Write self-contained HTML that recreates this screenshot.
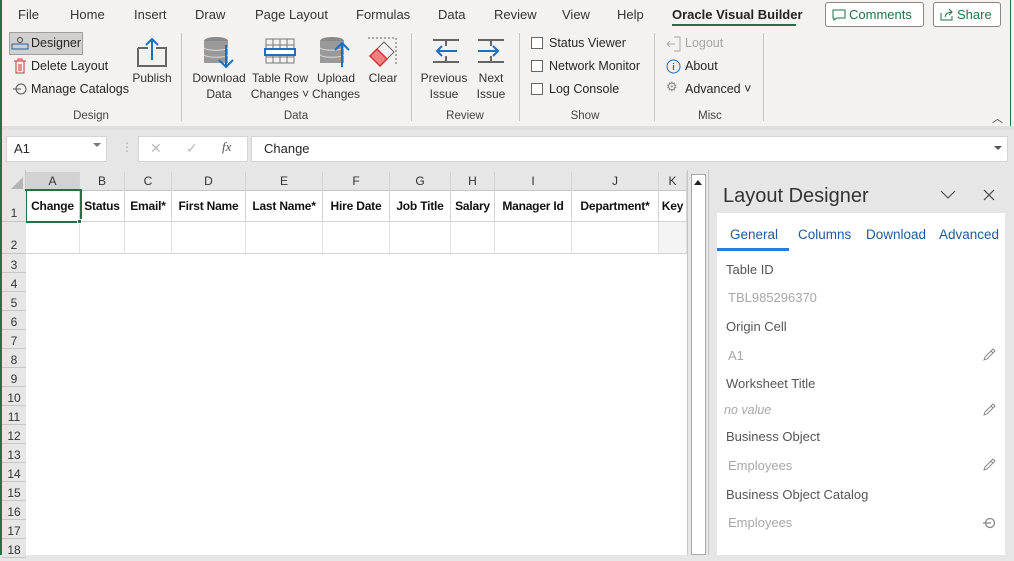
<!DOCTYPE html>
<html><head><meta charset="utf-8"><style>
*{box-sizing:border-box;margin:0;padding:0}
body{width:1014px;height:555px;overflow:hidden;font-family:"Segoe UI","Liberation Sans",sans-serif;font-size:12px;color:#262626;background:#e6e6e6;position:relative}
.a{position:absolute;white-space:nowrap}
.tab{top:7px;font-size:13px;color:#333}
.gl{top:110px;font-size:11.5px;color:#444;text-align:center}
.sep{position:absolute;top:33px;width:1px;height:88px;background:#c8c6c4}
.lbl{font-size:12px;color:#333;text-align:center;line-height:16px}
.cb{width:12px;height:12px;border:1px solid #666;background:#fff}
.ch{position:absolute;top:172px;height:19px;text-align:center;font-size:12px;color:#333;border-right:1px solid #d4d4d4;line-height:19px}
.hc{position:absolute;top:191px;height:31px;font-weight:bold;font-size:12px;color:#111;line-height:31px;text-align:center;border-right:1px solid #d4d4d4;border-bottom:1px solid #d4d4d4;background:#fff;letter-spacing:-0.2px}
.r2{position:absolute;top:222px;height:32px;border-right:1px solid #e1e1e1;border-bottom:1px solid #d4d4d4;background:#fff}
.rh{position:absolute;left:2px;width:24px;height:19px;font-size:12px;color:#333;text-align:center;border-bottom:1px solid #c6c6c6;background:#e6e6e6;line-height:22px}
.pl{position:absolute;left:726px;font-size:13px;color:#555}
.pv{position:absolute;left:728px;font-size:13px;color:#a8a8a8}
</style></head><body>
<div class="a" style="left:0;top:0;width:2px;height:555px;background:#217346;z-index:5"></div>
<div class="a" style="left:0;top:0;width:1014px;height:126px;background:#f3f2f1"></div>
<div class="a" style="left:0;top:126px;width:1014px;height:4px;background:#e1dfdd"></div>
<div class="a" style="left:1010px;top:0;width:4px;height:126px;border-left:1px solid #217346"></div>
<div class="a tab" style="left:18px">File</div>
<div class="a tab" style="left:70px">Home</div>
<div class="a tab" style="left:134px">Insert</div>
<div class="a tab" style="left:195px">Draw</div>
<div class="a tab" style="left:255px">Page Layout</div>
<div class="a tab" style="left:356px">Formulas</div>
<div class="a tab" style="left:438px">Data</div>
<div class="a tab" style="left:494px">Review</div>
<div class="a tab" style="left:562px">View</div>
<div class="a tab" style="left:617px">Help</div>
<div class="a tab" style="left:672px;font-weight:bold;color:#222">Oracle Visual Builder</div>
<div class="a" style="left:672px;top:24px;width:124px;height:2px;background:#217346"></div>
<div class="a" style="left:825px;top:2px;width:99px;height:25px;border:1px solid #8a8886;border-radius:3px;background:#fff;color:#217346;font-size:13px;line-height:23px;padding-left:23px">Comments</div>
<svg class="a" style="left:832px;top:9px" width="14" height="12"><path d="M1 1h12v8H5l-3 2V9H1z" fill="none" stroke="#217346"/></svg>
<div class="a" style="left:933px;top:2px;width:68px;height:25px;border:1px solid #8a8886;border-radius:3px;background:#fff;color:#217346;font-size:13px;line-height:23px;padding-left:23px">Share</div>
<svg class="a" style="left:940px;top:8px" width="14" height="13"><path d="M1 5v7h11V8M5 9c1-4 4-5 7-5M9 1l3 3-3 3" fill="none" stroke="#217346"/></svg>
<div class="a" style="left:9px;top:32px;width:74px;height:23px;background:#d2d0ce;border:1px solid #a19f9d"></div>
<svg class="a" style="left:11px;top:36px" width="18" height="14"><path d="M1 8h16v5H1z" fill="none" stroke="#1e5bb0"/><circle cx="9" cy="4" r="2.5" fill="none" stroke="#444"/></svg>
<div class="a" style="left:31px;top:36px;font-size:12.5px">Designer</div>
<svg class="a" style="left:13px;top:58px" width="14" height="16"><path d="M1 3h12M5 3V1h4v2M3 3v12h8V3M6 6v7M8 6v7" fill="none" stroke="#d13438"/></svg>
<div class="a" style="left:31px;top:59px;font-size:12.5px">Delete Layout</div>
<svg class="a" style="left:12px;top:82px" width="16" height="14"><circle cx="9" cy="7" r="5" fill="none" stroke="#555"/><path d="M1 7h8" stroke="#555"/></svg>
<div class="a" style="left:31px;top:82px;font-size:12.5px">Manage Catalogs</div>
<svg class="a" style="left:136px;top:36px" width="32" height="32"><path d="M2 12h10M20 12h10v18H2V12" fill="none" stroke="#666" stroke-width="2"/><path d="M16 24V3M10 9l6-6 6 6" fill="none" stroke="#1e6fc0" stroke-width="2"/></svg>
<div class="a lbl" style="left:129px;top:70px;width:46px">Publish</div>
<div class="a gl" style="left:60px;width:62px">Design</div>
<div class="sep" style="left:181px"></div>
<svg class="a" style="left:202px;top:35px" width="34" height="34"><ellipse cx="14" cy="6" rx="12" ry="4" fill="#888"/><rect x="2" y="6" width="24" height="22" fill="#999"/><path d="M2 13c4 3 20 3 24 0M2 20c4 3 20 3 24 0" stroke="#ddd" fill="none"/><path d="M24 10v22M17 25l7 7 7-7" fill="none" stroke="#1e6fc0" stroke-width="2"/></svg>
<div class="a lbl" style="left:190px;top:70px;width:58px">Download<br>Data</div>
<svg class="a" style="left:264px;top:37px" width="32" height="28"><path d="M2 2h28v24H2zM2 8h28M2 20h28M9 2v24M16 2v24M23 2v24" fill="none" stroke="#777"/><rect x="1" y="12" width="30" height="6" fill="#fff" stroke="#1e6fc0" stroke-width="2"/></svg>
<div class="a lbl" style="left:250px;top:70px;width:60px">Table Row<br>Changes ˅</div>
<svg class="a" style="left:318px;top:35px" width="34" height="34"><ellipse cx="14" cy="6" rx="12" ry="4" fill="#888"/><rect x="2" y="6" width="24" height="22" fill="#999"/><path d="M2 13c4 3 20 3 24 0M2 20c4 3 20 3 24 0" stroke="#ddd" fill="none"/><path d="M24 32V8M17 15l7-7 7 7" fill="none" stroke="#1e6fc0" stroke-width="2"/></svg>
<div class="a lbl" style="left:312px;top:70px;width:48px">Upload<br>Changes</div>
<svg class="a" style="left:366px;top:36px" width="32" height="32"><path d="M2 2h28v28" fill="none" stroke="#666" stroke-dasharray="2 2"/><path d="M4 20L18 6l10 10-14 14z" fill="#f2f2f2" stroke="#666"/><path d="M4 20l7-7 10 10-7 7z" fill="#f08080" stroke="#d13438" stroke-width="1.5"/></svg>
<div class="a lbl" style="left:366px;top:70px;width:34px">Clear</div>
<div class="a gl" style="left:266px;width:60px">Data</div>
<div class="sep" style="left:411px"></div>
<svg class="a" style="left:431px;top:38px" width="30" height="26"><path d="M2 2h26M2 24h26M15 2v6M15 18v6" stroke="#666" stroke-width="2"/><path d="M26 13H6M11 8l-5 5 5 5" fill="none" stroke="#1e6fc0" stroke-width="2"/></svg>
<div class="a lbl" style="left:418px;top:70px;width:52px">Previous<br>Issue</div>
<svg class="a" style="left:476px;top:38px" width="30" height="26"><path d="M2 2h26M2 24h26M15 2v6M15 18v6" stroke="#666" stroke-width="2"/><path d="M2 13h20M17 8l5 5-5 5" fill="none" stroke="#1e6fc0" stroke-width="2"/></svg>
<div class="a lbl" style="left:474px;top:70px;width:34px">Next<br>Issue</div>
<div class="a gl" style="left:440px;width:50px">Review</div>
<div class="sep" style="left:519px"></div>
<div class="a cb" style="left:531px;top:37px"></div><div class="a" style="left:549px;top:36px;font-size:12.5px">Status Viewer</div>
<div class="a cb" style="left:531px;top:60px"></div><div class="a" style="left:549px;top:59px;font-size:12.5px">Network Monitor</div>
<div class="a cb" style="left:531px;top:83px"></div><div class="a" style="left:549px;top:82px;font-size:12.5px">Log Console</div>
<div class="a gl" style="left:560px;width:50px">Show</div>
<div class="sep" style="left:654px"></div>
<svg class="a" style="left:666px;top:36px" width="16" height="16"><path d="M8 1h6v14H8M1 8h8M4 5L1 8l3 3" fill="none" stroke="#aaa"/></svg>
<div class="a" style="left:685px;top:36px;font-size:12.5px;color:#a6a6a6">Logout</div>
<svg class="a" style="left:666px;top:59px" width="15" height="15"><circle cx="7.5" cy="7.5" r="6.5" fill="none" stroke="#1e6fc0"/><path d="M7.5 6v5M7.5 4v1" stroke="#1e6fc0" stroke-width="1.3"/></svg>
<div class="a" style="left:685px;top:59px;font-size:12.5px">About</div>
<div class="a" style="left:666px;top:79px;font-size:13px;color:#888">⚙</div>
<div class="a" style="left:685px;top:82px;font-size:12.5px">Advanced ˅</div>
<div class="a gl" style="left:690px;width:40px">Misc</div>
<div class="sep" style="left:763px"></div>
<div class="a" style="left:992px;top:110px;font-size:11px;color:#444">︿</div>
<div class="a" style="left:6px;top:136px;width:101px;height:26px;background:#fff;border:1px solid #d4d4d4;font-size:13px;line-height:24px;padding-left:7px">A1</div>
<div class="a" style="left:93px;top:143px;width:0;height:0;border-left:4px solid transparent;border-right:4px solid transparent;border-top:4px solid #777"></div>
<div class="a" style="left:121px;top:140px;color:#aaa;font-size:12px">⋮</div>
<div class="a" style="left:138px;top:136px;width:110px;height:26px;background:#fff;border:1px solid #d4d4d4"></div>
<div class="a" style="left:150px;top:140px;color:#bbb;font-size:14px">✕</div>
<div class="a" style="left:186px;top:140px;color:#bbb;font-size:14px">✓</div>
<div class="a" style="left:222px;top:139px;color:#555;font-size:13px;font-style:italic;font-family:'Liberation Serif',serif">fx</div>
<div class="a" style="left:251px;top:136px;width:757px;height:26px;background:#fff;border:1px solid #d4d4d4;font-size:13px;line-height:24px;padding-left:12px">Change</div>
<div class="a" style="left:994px;top:146px;width:0;height:0;border-left:4px solid transparent;border-right:4px solid transparent;border-top:4px solid #555"></div>
<div class="a" style="left:2px;top:170px;width:686px;height:385px;background:#fff"></div>
<div class="a" style="left:2px;top:170px;width:686px;height:21px;background:#e6e6e6;border-bottom:1px solid #c6c6c6"></div>
<div class="a" style="left:2px;top:170px;width:24px;height:385px;background:#e6e6e6;border-right:1px solid #c6c6c6"></div>
<svg class="a" style="left:10px;top:176px" width="14" height="14"><path d="M13 1v12H1z" fill="#b4b4b4"/></svg>
<div class="ch" style="left:26px;width:54px;background:#d2d2d2">A</div>
<div class="ch" style="left:80px;width:45px">B</div>
<div class="ch" style="left:125px;width:47px">C</div>
<div class="ch" style="left:172px;width:74px">D</div>
<div class="ch" style="left:246px;width:77px">E</div>
<div class="ch" style="left:323px;width:67px">F</div>
<div class="ch" style="left:390px;width:61px">G</div>
<div class="ch" style="left:451px;width:44px">H</div>
<div class="ch" style="left:495px;width:77px">I</div>
<div class="ch" style="left:572px;width:87px">J</div>
<div class="ch" style="left:659px;width:28px">K</div>
<div class="hc" style="left:26px;width:54px">Change</div>
<div class="hc" style="left:80px;width:45px">Status</div>
<div class="hc" style="left:125px;width:47px">Email*</div>
<div class="hc" style="left:172px;width:74px">First Name</div>
<div class="hc" style="left:246px;width:77px">Last Name*</div>
<div class="hc" style="left:323px;width:67px">Hire Date</div>
<div class="hc" style="left:390px;width:61px">Job Title</div>
<div class="hc" style="left:451px;width:44px">Salary</div>
<div class="hc" style="left:495px;width:77px">Manager Id</div>
<div class="hc" style="left:572px;width:87px">Department*</div>
<div class="hc" style="left:659px;width:28px">Key</div>
<div class="r2" style="left:26px;width:54px"></div><div class="r2" style="left:80px;width:45px"></div><div class="r2" style="left:125px;width:47px"></div><div class="r2" style="left:172px;width:74px"></div><div class="r2" style="left:246px;width:77px"></div><div class="r2" style="left:323px;width:67px"></div><div class="r2" style="left:390px;width:61px"></div><div class="r2" style="left:451px;width:44px"></div><div class="r2" style="left:495px;width:77px"></div><div class="r2" style="left:572px;width:87px"></div><div class="r2" style="left:659px;width:28px;background:#f4f4f4"></div>
<div class="a" style="left:25px;top:189px;width:57px;height:34px;border:2px solid #217346"></div>
<div class="a" style="left:77px;top:219px;width:5px;height:5px;background:#217346;border:1px solid #fff"></div>
<div class="rh" style="top:191px;height:31px;line-height:44px">1</div>
<div class="rh" style="top:222px;height:32px;line-height:46px">2</div>
<div class="rh" style="top:254px">3</div><div class="rh" style="top:273px">4</div><div class="rh" style="top:292px">5</div><div class="rh" style="top:311px">6</div><div class="rh" style="top:330px">7</div><div class="rh" style="top:349px">8</div><div class="rh" style="top:368px">9</div><div class="rh" style="top:387px">10</div><div class="rh" style="top:406px">11</div><div class="rh" style="top:425px">12</div><div class="rh" style="top:444px">13</div><div class="rh" style="top:463px">14</div><div class="rh" style="top:482px">15</div><div class="rh" style="top:501px">16</div><div class="rh" style="top:520px">17</div><div class="rh" style="top:539px">18</div>
<div class="a" style="left:687px;top:170px;width:21px;height:385px;background:#e6e6e6;border-left:1px solid #c6c6c6"></div>
<div class="a" style="left:691px;top:174px;width:15px;height:381px;background:#fff;border:1px solid #aaa"></div>
<div class="a" style="left:694px;top:180px;width:0;height:0;border-left:4px solid transparent;border-right:4px solid transparent;border-bottom:5px solid #222"></div>
<div class="a" style="left:708px;top:170px;width:1px;height:385px;background:#c6c6c6"></div>
<div class="a" style="left:709px;top:170px;width:305px;height:385px;background:#e6e6e6"></div>
<div class="a" style="left:723px;top:185px;font-size:20px;color:#333">Layout Designer</div>
<svg class="a" style="left:940px;top:190px" width="16" height="10"><path d="M1 1l7 7 7-7" fill="none" stroke="#444"/></svg>
<svg class="a" style="left:983px;top:189px" width="12" height="12"><path d="M1 1l10 10M11 1L1 11" stroke="#444" stroke-width="1.2"/></svg>
<div class="a" style="left:717px;top:213px;width:288px;height:342px;background:#fff"></div>
<div class="a" style="left:730px;top:227px;font-size:13.5px;color:#1e5b9c">General</div>
<div class="a" style="left:798px;top:227px;font-size:13.5px;color:#1e5b9c">Columns</div>
<div class="a" style="left:866px;top:227px;font-size:13.5px;color:#1e5b9c">Download</div>
<div class="a" style="left:939px;top:227px;font-size:13.5px;color:#1e5b9c">Advanced</div>
<div class="a" style="left:717px;top:248px;width:72px;height:3px;background:#2b7cd3"></div>
<div class="pl" style="top:262px">Table ID</div>
<div class="pv" style="top:290px">TBL985296370</div>
<div class="pl" style="top:319px">Origin Cell</div>
<div class="pv" style="top:348px">A1</div>
<div class="pl" style="top:376px">Worksheet Title</div>
<div class="pv" style="top:403px;left:724px;font-style:italic;font-size:12.5px">no value</div>
<div class="pl" style="top:429px">Business Object</div>
<div class="pv" style="top:458px">Employees</div>
<div class="pl" style="top:487px">Business Object Catalog</div>
<div class="pv" style="top:515px">Employees</div>
<svg class="a" style="left:982px;top:348px" width="14" height="14"><path d="M2 12l1-3 8-8 2 2-8 8zM9 3l2 2" fill="none" stroke="#888"/></svg>
<svg class="a" style="left:982px;top:403px" width="14" height="14"><path d="M2 12l1-3 8-8 2 2-8 8zM9 3l2 2" fill="none" stroke="#888"/></svg>
<svg class="a" style="left:982px;top:458px" width="14" height="14"><path d="M2 12l1-3 8-8 2 2-8 8zM9 3l2 2" fill="none" stroke="#888"/></svg>
<svg class="a" style="left:982px;top:517px" width="14" height="12"><circle cx="8" cy="6" r="4.5" fill="none" stroke="#888" stroke-width="1.3"/><path d="M1 6h8" stroke="#888" stroke-width="1.3"/></svg>
</body></html>
